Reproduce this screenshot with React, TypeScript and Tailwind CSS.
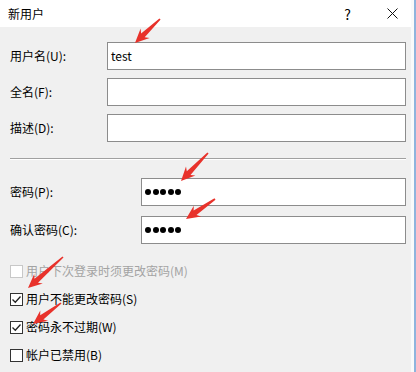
import React from "react";

type Pt = [number, number];

function arrowPoints(tail: Pt, tip: Pt): string {
  const [x1, y1] = tail;
  const [x2, y2] = tip;
  const dx = x2 - x1;
  const dy = y2 - y1;
  const len = Math.hypot(dx, dy);
  const ux = dx / len;
  const uy = dy / len;
  const nx = -uy;
  const ny = ux;
  const headLen = 14;
  const headW = 6.5;
  const shaftTail = 0.8;
  const shaftHead = 2.6;
  const bx = x2 - ux * headLen;
  const by = y2 - uy * headLen;
  const pts: Pt[] = [
    [x1 + nx * shaftTail, y1 + ny * shaftTail],
    [bx + ux * 3 + nx * shaftHead, by + uy * 3 + ny * shaftHead],
    [bx + nx * headW, by + ny * headW],
    [x2, y2],
    [bx - nx * headW, by - ny * headW],
    [bx + ux * 3 - nx * shaftHead, by + uy * 3 - ny * shaftHead],
    [x1 - nx * shaftTail, y1 - ny * shaftTail],
  ];
  return pts.map((p) => `${p[0].toFixed(1)},${p[1].toFixed(1)}`).join(" ");
}

const arrows: [Pt, Pt][] = [
  [[160, 19], [135, 43]],
  [[208, 153], [181, 181]],
  [[215, 199], [186, 219]],
  [[63, 257], [28, 288]],
  [[61, 303], [33, 324]],
];

function Input({ className, children }: { className: string; children?: React.ReactNode }) {
  return (
    <div className={`h-[28px] bg-white border border-[#8c8c8c] flex items-center px-[3px] ${className}`}>
      {children}
    </div>
  );
}

function Dots() {
  return (
    <div className="flex gap-[1.5px] items-center">
      {[0, 1, 2, 3, 4].map((i) => (
        <span key={i} className="block w-[6px] h-[6px] rounded-full bg-black" />
      ))}
    </div>
  );
}

function Check({ checked, disabled, label }: { checked?: boolean; disabled?: boolean; label: string }) {
  return (
    <div className="h-[28px] flex items-center">
      <div
        className={`w-[13px] h-[13px] border flex items-center justify-center bg-white ${
          disabled ? "border-[#c8c8c8]" : "border-[#333333]"
        }`}
      >
        {checked && (
          <svg width="11" height="11" viewBox="0 0 11 11">
            <path d="M1.5 5.5 L4.3 8.3 L9.5 2.5" fill="none" stroke="#222" strokeWidth="1.3" />
          </svg>
        )}
      </div>
      <span className={`ml-[3px] text-[12px] ${disabled ? "text-[#a3a3a3]" : "text-black"}`}>{label}</span>
    </div>
  );
}

export default function App() {
  return (
    <div
      className="relative w-[416px] h-[372px] overflow-hidden flex bg-[#f0f0f0]"
      style={{ fontFamily: '"Noto Sans CJK SC", "Noto Sans", sans-serif' }}
    >
      <div className="w-[411px] flex flex-col">
        <div className="h-[27px] bg-white flex items-center pl-[8px] pr-[13px] text-[12px] text-black">
          <span>新用户</span>
          <span className="ml-auto mr-[36px] text-[14px] leading-none">?</span>
          <svg width="11" height="11" viewBox="0 0 11 11">
            <path d="M0.5 0.5 L10.5 10.5 M10.5 0.5 L0.5 10.5" stroke="#111" strokeWidth="1" />
          </svg>
        </div>
        <div className="flex flex-col pl-[10px] pr-[5px] pt-[15px]">
          <div className="flex flex-col gap-[8px]">
            <div className="flex items-center">
              <span className="w-[97px] text-[12px] text-black">用户名(U):</span>
              <Input className="flex-1">
                <span className="text-[12px] text-black">test</span>
              </Input>
            </div>
            <div className="flex items-center">
              <span className="w-[97px] text-[12px] text-black">全名(F):</span>
              <Input className="flex-1" />
            </div>
            <div className="flex items-center">
              <span className="w-[97px] text-[12px] text-black">描述(D):</span>
              <Input className="flex-1" />
            </div>
          </div>
          <div className="mt-[16px] h-[2px] flex flex-col">
            <div className="h-[1px] bg-[#a0a0a0]" />
            <div className="h-[1px] bg-white" />
          </div>
          <div className="mt-[18px] flex flex-col gap-[10px]">
            <div className="flex items-center">
              <span className="w-[131px] text-[12px] text-black">密码(P):</span>
              <Input className="flex-1">
                <Dots />
              </Input>
            </div>
            <div className="flex items-center">
              <span className="w-[131px] text-[12px] text-black">确认密码(C):</span>
              <Input className="flex-1">
                <Dots />
              </Input>
            </div>
          </div>
          <div className="mt-[13px] flex flex-col">
            <Check disabled label="用户下次登录时须更改密码(M)" />
            <Check checked label="用户不能更改密码(S)" />
            <Check checked label="密码永不过期(W)" />
            <Check label="帐户已禁用(B)" />
          </div>
        </div>
      </div>
      <div className="w-[3px] bg-[#fafafa]" />
      <div className="w-[2px] bg-[#8fb4dd]" />
      <svg className="absolute left-0 top-0 pointer-events-none" width="416" height="372">
        {arrows.map(([t, h], i) => (
          <polygon key={i} points={arrowPoints(t, h)} fill="#e8322b" />
        ))}
      </svg>
    </div>
  );
}
